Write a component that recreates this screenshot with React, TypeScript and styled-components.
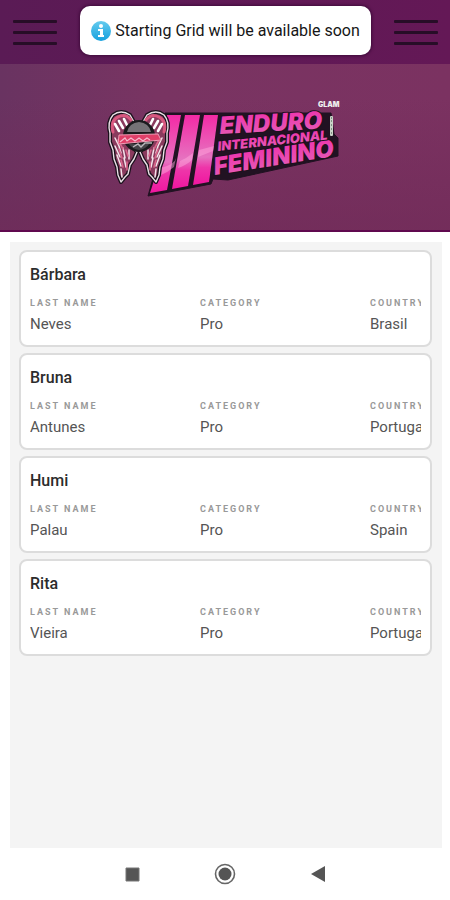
import React from 'react';
import styled, { createGlobalStyle } from 'styled-components';

const GlobalStyle = createGlobalStyle`
  * { box-sizing: border-box; }
  body { margin: 0; background: #fff; font-family: Roboto, "Liberation Sans", sans-serif; }
`;

const Screen = styled.div`
  display: flex;
  flex-direction: column;
  min-height: 100vh;
`;

const TopBar = styled.header`
  display: flex;
  align-items: center;
  justify-content: space-between;
  height: 64px;
  padding: 0 12px 0 13px;
  background: linear-gradient(90deg, #5a1b55, #641856);
`;

const MenuButton = styled.button`
  display: flex;
  flex-direction: column;
  gap: 8px;
  width: 44px;
  padding: 0;
  border: 0;
  background: none;
`;

const MenuLine = styled.span`
  height: 3px;
  border-radius: 1px;
  background: #270d27;
`;

const Toast = styled.div`
  display: flex;
  align-items: center;
  justify-content: center;
  gap: 4px;
  height: 49px;
  margin-bottom: 3px;
  padding: 0 11px;
  border-radius: 10px;
  background: #fff;
  box-shadow: 0 0 3px 1px #400b3c;
  color: #161616;
  font-size: 16px;
  line-height: 20px;
  white-space: nowrap;
`;

const Banner = styled.section`
  display: flex;
  justify-content: center;
  height: 168px;
  padding-top: 32px;
  border-bottom: 2px solid #60094f;
  background:
    linear-gradient(180deg, rgba(112, 43, 88, 0) 20%, rgba(112, 43, 88, 0.7)),
    linear-gradient(90deg, #693361, #793462 35%, #7b3261);
`;

const Main = styled.main`
  flex: 1;
  display: flex;
  flex-direction: column;
  gap: 6px;
  margin: 10px 8px 0 10px;
  padding: 8px 10px 8px 9px;
  background: #f4f4f4;
`;

const Card = styled.article`
  height: 97px;
  padding: 12px 9px 0;
  border: 2px solid #dcdcdc;
  border-radius: 8px;
  background: #fff;
`;

const Name = styled.h2`
  margin: 0;
  color: #2c2c2c;
  font-size: 16px;
  font-weight: 500;
  line-height: 22px;
`;

const Details = styled.dl`
  display: grid;
  grid-template-columns: repeat(3, minmax(170px, 1fr));
  margin: 0;
  overflow: hidden;
`;

const Field = styled.div`
  padding-top: 11px;
`;

const Label = styled.dt`
  color: #999;
  font-size: 9px;
  font-weight: 700;
  letter-spacing: 2px;
  line-height: 12px;
  text-transform: uppercase;
`;

const Value = styled.dd`
  margin: 5px 0 0;
  color: #555;
  font-size: 15px;
  line-height: 20px;
`;

const SystemNav = styled.nav`
  display: flex;
  align-items: center;
  justify-content: center;
  gap: 64px;
  height: 52px;
  background: #fff;
`;

const NavButton = styled.button`
  display: flex;
  width: 29px;
  justify-content: center;
  padding: 0;
  border: 0;
  background: none;
`;

const LogoText = styled.text`
  font-family: Inter, "Liberation Sans", sans-serif;
  font-weight: 900;
  font-style: italic;
  fill: url(#lettering);
  stroke: #1d101f;
  stroke-width: 2px;
  stroke-linejoin: round;
  paint-order: stroke;
`;

const SponsorText = styled.text`
  font-family: Inter, "Liberation Sans", sans-serif;
  font-weight: 900;
  font-size: 7px;
  fill: #eee;
`;

const wingOutline =
  'M27 26 L23 19 Q14 13 6 19 Q0 26 3 37 L3 46 L6 54 L7 63 L10 71 L11 79 L14 86 L18 81 L21 78 L23 69 L27 63 L30 56 L22 47Z';

function Wing() {
  return (
    <g strokeLinejoin="round" strokeLinecap="round">
      <path d={wingOutline} fill="#8a3b5e" stroke="#1b111c" strokeWidth="4" />
      <path d={wingOutline} fill="none" stroke="#e9dfe5" strokeWidth="1.4" />
      <path d="M6 36 Q3 25 11 21 Q19 17 24 24" fill="none" stroke="#d8587f" strokeWidth="3" />
      <path d="M8 28 L12 35 M12 25 L16 32 M17 23 L20 29" stroke="#fff" strokeWidth="2.6" />
      <path d="M8 42 L12 50 L14 57 M8 50 L13 61 M10 59 L14 70 M16 52 L18 62 M17 62 L19 71 M22 54 L22 63 M14 73 L15 81" fill="none" stroke="#f3e3ea" strokeWidth="1.5" />
      <path d="M11 44 L16 53 M12 53 L15 62 M14 64 L16 71 M19 54 L21 60 M20 66 L20 74" stroke="#d9648a" strokeWidth="1.6" />
    </g>
  );
}

function EventLogo() {
  return (
    <svg width="240" height="110" viewBox="0 0 240 110" role="img" aria-label="III Enduro Internacional Feminino">
      <defs>
        <linearGradient id="lettering" x1="0" y1="0" x2="0" y2="1">
          <stop offset="0" stopColor="#f02fac" />
          <stop offset="1" stopColor="#e45fb6" />
        </linearGradient>
        <linearGradient id="bars" x1="0" y1="0" x2="0" y2="1">
          <stop offset="0" stopColor="#f32aa5" />
          <stop offset=".6" stopColor="#e673c0" />
          <stop offset=".75" stopColor="#ee35a9" />
          <stop offset="1" stopColor="#f016a0" />
        </linearGradient>
      </defs>
      <path
        d="M60 17H226L229 38L233 42V60L123 84L108 83L106 88L43 100L50 75Z"
        fill="#211222" stroke="#211222" strokeWidth="1" strokeLinejoin="round"
      />
      <g fill="url(#bars)">
        <path d="M62 19H76L62 94L45 97L52 75Z" />
        <path d="M80 19H95L83 90L67 93Z" />
        <path d="M99 19H113L104 86L88 89Z" />
      </g>
      <path d="M56 72Q70 68 71 62L69 71Q62 77 54 80Z M75 65Q82 62 88 57L87 64Q80 70 73 72Z M94 54L109 50L108 55L93 61Z" fill="#ffa6dc" opacity=".5" />
      <g transform="translate(2 0)">
        <Wing />
        <g transform="translate(63 0) scale(-1 1)"><Wing /></g>
        <circle cx="32" cy="40" r="16" fill="#1b1a1d" />
        <path d="M20 36Q22 27 32 26Q42 27 44 36Z" fill="#757276" />
        <path d="M22 48H42Q39 53 32 54Q25 53 22 48Z" fill="#454347" />
        <path d="M12 39L51 38L54 44L44 45L11 48Z" fill="#df3f68" stroke="#ef9cb5" />
        <path d="M13 46L18 42L20 45L24 42L28 45L32 42L36 45L40 42L43 44" fill="none" stroke="#f6b8cb" strokeWidth="1.2" />
        <path d="M26 51L31 48L34 51L38 47L45 47" fill="none" stroke="#bcb9bc" strokeWidth="1.4" />
      </g>
      <LogoText x="115" y="38" fontSize="24" transform="rotate(-3 115 38)">ENDURO</LogoText>
      <LogoText x="110" y="79" fontSize="24" transform="rotate(-9 110 79)">FEMININO</LogoText>
      <LogoText x="113" y="55" fontSize="13" transform="rotate(-6 113 55)">INTERNACIONAL</LogoText>
      <rect x="225" y="20" width="3" height="20" rx="1" fill="#c9d4c8" />
      <path d="M226 22H227M226 25H227M226 29H227M226 33H227M226 37H227" stroke="#3d4c42" />
      <SponsorText x="213" y="11">GLAM</SponsorText>
    </svg>
  );
}

function InfoIcon() {
  return (
    <svg width="20" height="20" viewBox="0 0 20 20" aria-hidden="true">
      <defs>
        <linearGradient id="info" x1="0" y1="0" x2="0" y2="1">
          <stop stopColor="#65cbee" />
          <stop offset="1" stopColor="#17a1de" />
        </linearGradient>
      </defs>
      <circle cx="10" cy="10" r="10" fill="url(#info)" />
      <circle cx="10" cy="5" r="2" fill="#fff" />
      <path d="M7 8H12V14H13V16H7V14H9V10H7Z" fill="#fff" />
    </svg>
  );
}

function Menu({ label }: { label: string }) {
  return (
    <MenuButton type="button" aria-label={label}>
      <MenuLine /><MenuLine /><MenuLine />
    </MenuButton>
  );
}

const riders = [
  { name: 'Bárbara', lastName: 'Neves', category: 'Pro', country: 'Brasil' },
  { name: 'Bruna', lastName: 'Antunes', category: 'Pro', country: 'Portugal' },
  { name: 'Humi', lastName: 'Palau', category: 'Pro', country: 'Spain' },
  { name: 'Rita', lastName: 'Vieira', category: 'Pro', country: 'Portugal' },
];

export default function App() {
  return (
    <>
      <GlobalStyle />
      <Screen>
        <TopBar>
          <Menu label="Menu" />
          <Toast role="status"><InfoIcon />Starting Grid will be available soon</Toast>
          <Menu label="Options" />
        </TopBar>
        <Banner><EventLogo /></Banner>
        <Main>
          {riders.map((rider) => (
            <Card key={rider.name}>
              <Name>{rider.name}</Name>
              <Details>
                <Field><Label>Last name</Label><Value>{rider.lastName}</Value></Field>
                <Field><Label>Category</Label><Value>{rider.category}</Value></Field>
                <Field><Label>Country</Label><Value>{rider.country}</Value></Field>
              </Details>
            </Card>
          ))}
        </Main>
        <SystemNav aria-label="System">
          <NavButton type="button" aria-label="Recent apps">
            <svg width="15" height="15" viewBox="0 0 15 15"><path d="M1 1H14V14H1Z" fill="#555" stroke="#777" /></svg>
          </NavButton>
          <NavButton type="button" aria-label="Home">
            <svg width="22" height="22" viewBox="0 0 22 22">
              <circle cx="11" cy="11" r="9.5" fill="none" stroke="#666" strokeWidth="1.6" />
              <circle cx="11" cy="11" r="6.5" fill="#555" />
            </svg>
          </NavButton>
          <NavButton type="button" aria-label="Back">
            <svg width="14" height="16" viewBox="0 0 14 16"><path d="M0 8L14 0V16Z" fill="#555" /></svg>
          </NavButton>
        </SystemNav>
      </Screen>
    </>
  );
}
